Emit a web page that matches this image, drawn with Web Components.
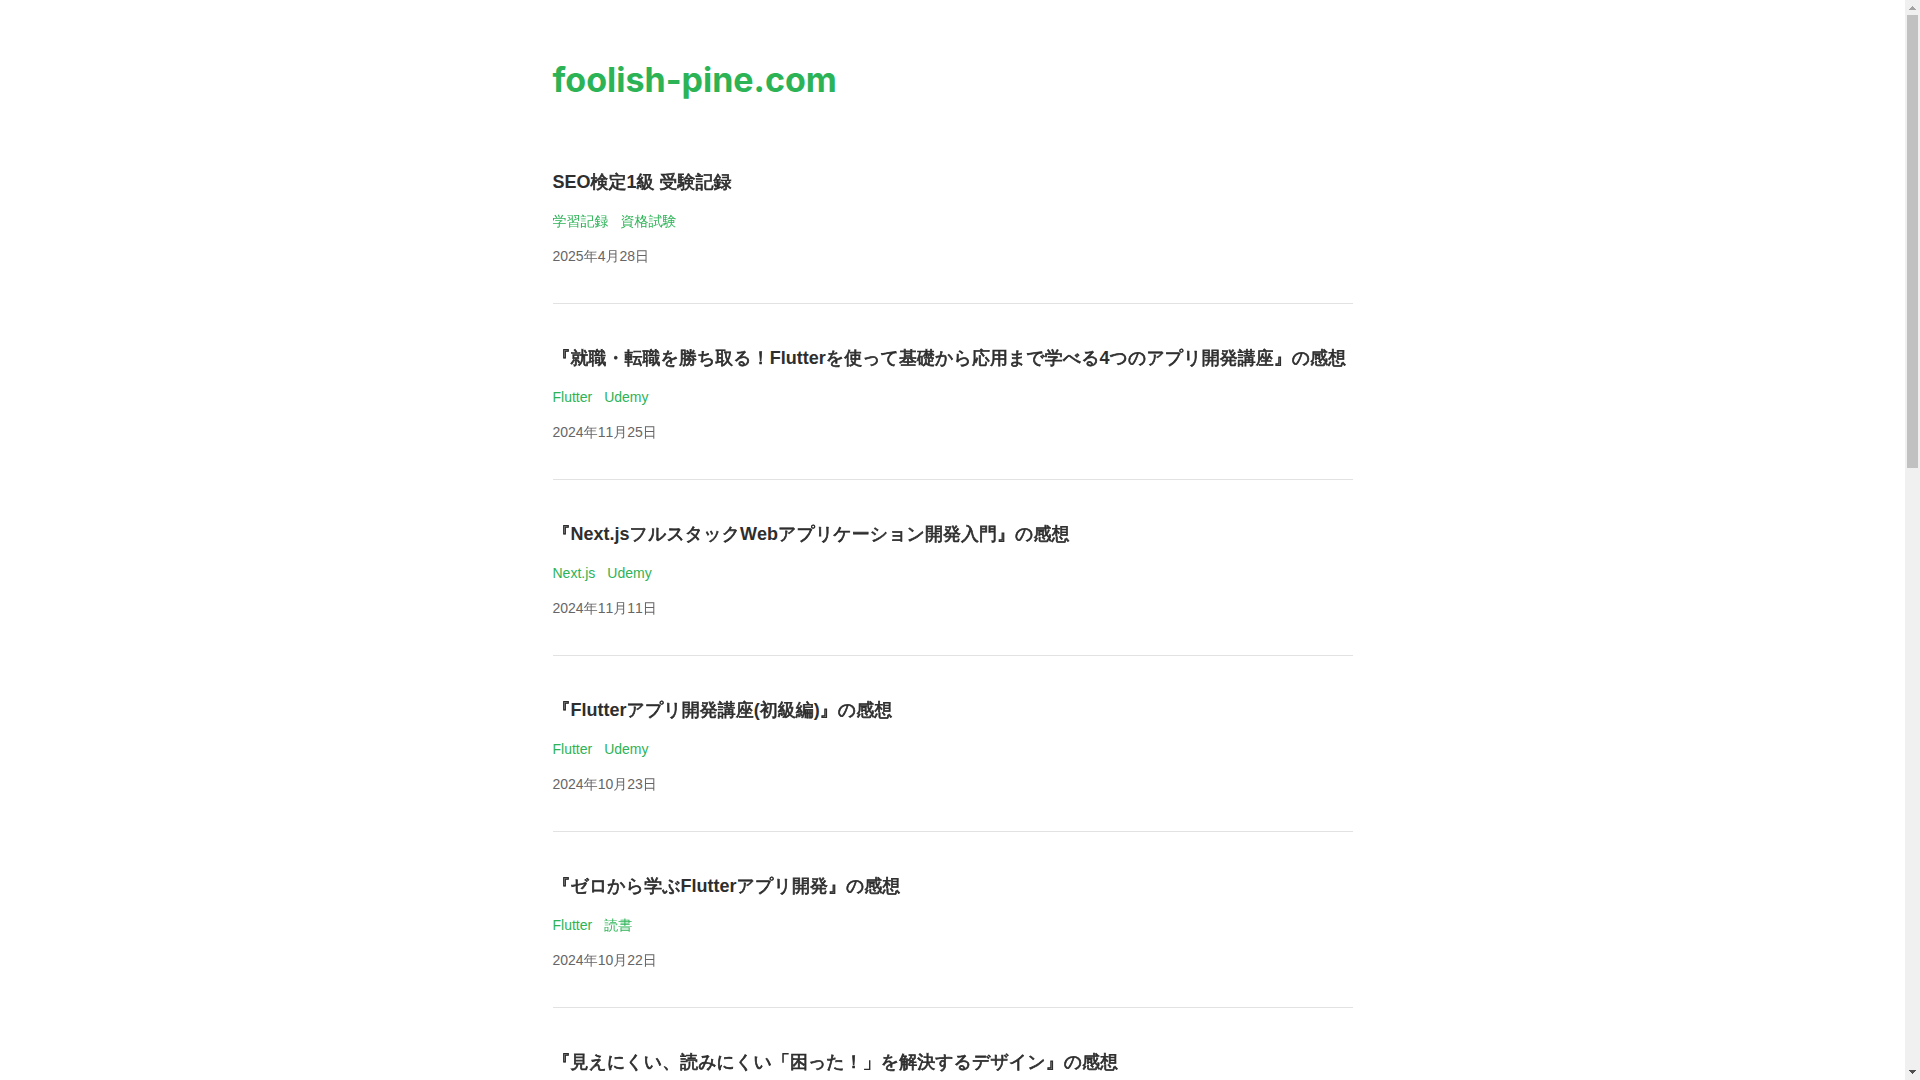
<!DOCTYPE html>
<html lang="ja">
<head>
<meta charset="utf-8">
<meta name="viewport" content="width=device-width, initial-scale=1">
<title>foolish-pine.com</title>
<style>
  body {
    margin: 0;
    height: 100vh;
    overflow: hidden;
    background: #fff;
    color: #2e2e2e;
    font-family: "Liberation Sans", "WenQuanYi Zen Hei", "Noto Sans CJK JP", sans-serif;
    font-kerning: none;
  }
</style>
</head>
<body>
<blog-window>
  <site-header></site-header>
  <post-item heading="SEO検定1級 受験記録" tags="学習記録,資格試験" date="2025年4月28日" datetime="2025-04-28"></post-item>
  <post-item heading="『就職・転職を勝ち取る！Flutterを使って基礎から応用まで学べる4つのアプリ開発講座』の感想" tags="Flutter,Udemy" date="2024年11月25日" datetime="2024-11-25"></post-item>
  <post-item heading="『Next.jsフルスタックWebアプリケーション開発入門』の感想" tags="Next.js,Udemy" date="2024年11月11日" datetime="2024-11-11"></post-item>
  <post-item heading="『Flutterアプリ開発講座(初級編)』の感想" tags="Flutter,Udemy" date="2024年10月23日" datetime="2024-10-23"></post-item>
  <post-item heading="『ゼロから学ぶFlutterアプリ開発』の感想" tags="Flutter,読書" date="2024年10月22日" datetime="2024-10-22"></post-item>
  <post-item heading="『見えにくい、読みにくい「困った！」を解決するデザイン』の感想"></post-item>
</blog-window>

<template id="window-template">
  <style>
    :host { display: flex; height: 100%; }
    .view { flex: 1; min-width: 0; overflow: hidden; }
    main { max-width: 800px; margin: 0 auto; }
  </style>
  <div class="view"><main><slot></slot></main></div>
  <scroll-bar></scroll-bar>
</template>

<template id="header-template">
  <style>
    :host { display: block; padding: 56px 0 60px; }
    h1 { margin: 0; font: 700 34px/48px Inter, sans-serif; font-kerning: auto; }
    a { color: #2cb356; text-decoration: none; }
  </style>
  <header><h1><a href="#">foolish-pine.com</a></h1></header>
</template>

<template id="post-template">
  <style>
    :host { display: block; padding: 40px 0 37px; border-bottom: 1px solid #e2e2e2; }
    :host(:first-of-type) { padding-top: 4px; }
    article { display: flex; flex-direction: column; gap: 15px; }
    h2 { margin: 0; font-size: 18px; line-height: 28px; }
    /* The Japanese face has one weight only, so its strokes are thickened here. */
    h2 span { -webkit-text-stroke: 0.04em currentColor; }
    a { color: inherit; text-decoration: none; }
    ul { display: flex; flex-wrap: wrap; gap: 12px; margin: 0; padding: 0; list-style: none; color: #2cb356; font-size: 14px; line-height: 20px; }
    time { color: #666; font-size: 14px; line-height: 20px; }
  </style>
  <article>
    <h2><a href="#"></a></h2>
    <ul></ul>
    <time></time>
  </article>
</template>

<template id="scroll-template">
  <style>
    :host { display: flex; flex-direction: column; width: 15px; background: #f0f0f0; }
    svg { display: block; width: 15px; height: 15px; }
    .track { flex: 1; padding: 0 2px; }
    .thumb { height: 43.1%; background: #c1c1c1; }
  </style>
  <svg viewBox="0 0 15 15" shape-rendering="crispEdges"><path d="M7 6h1v1h1v1h1v1h1v1H4V9h1V8h1V7h1z" fill="#a3a3a3"/></svg>
  <div class="track"><div class="thumb"></div></div>
  <svg viewBox="0 0 15 15" shape-rendering="crispEdges"><path d="M4 5h7v1h-1v1H9v1H8v1H7V8H6V7H5V6H4z" fill="#505050"/></svg>
</template>

<script>
  class TemplateElement extends HTMLElement {
    connectedCallback() {
      if (this.shadowRoot) return;
      this.attachShadow({ mode: "open" })
        .append(document.getElementById(this.constructor.template).content.cloneNode(true));
      this.fill();
    }
    fill() {}
  }

  class BlogWindow extends TemplateElement { static template = "window-template"; }
  class SiteHeader extends TemplateElement { static template = "header-template"; }
  class ScrollBar extends TemplateElement { static template = "scroll-template"; }

  class PostItem extends TemplateElement {
    static template = "post-template";
    fill() {
      const root = this.shadowRoot;
      const heading = root.querySelector("h2 a");
      for (const run of this.getAttribute("heading").match(/[\x20-\x7e]+|[^\x20-\x7e]+/g)) {
        if (/^[\x20-\x7e]/.test(run)) {
          heading.append(run);
        } else {
          const span = document.createElement("span");
          span.textContent = run;
          heading.append(span);
        }
      }
      const list = root.querySelector("ul");
      for (const tag of (this.getAttribute("tags") || "").split(",").filter(Boolean)) {
        const item = document.createElement("li");
        const link = document.createElement("a");
        link.href = "#";
        link.textContent = tag;
        item.append(link);
        list.append(item);
      }
      const time = root.querySelector("time");
      time.textContent = this.getAttribute("date") || "";
      time.dateTime = this.getAttribute("datetime") || "";
    }
  }

  customElements.define("blog-window", BlogWindow);
  customElements.define("site-header", SiteHeader);
  customElements.define("scroll-bar", ScrollBar);
  customElements.define("post-item", PostItem);
</script>
</body>
</html>
